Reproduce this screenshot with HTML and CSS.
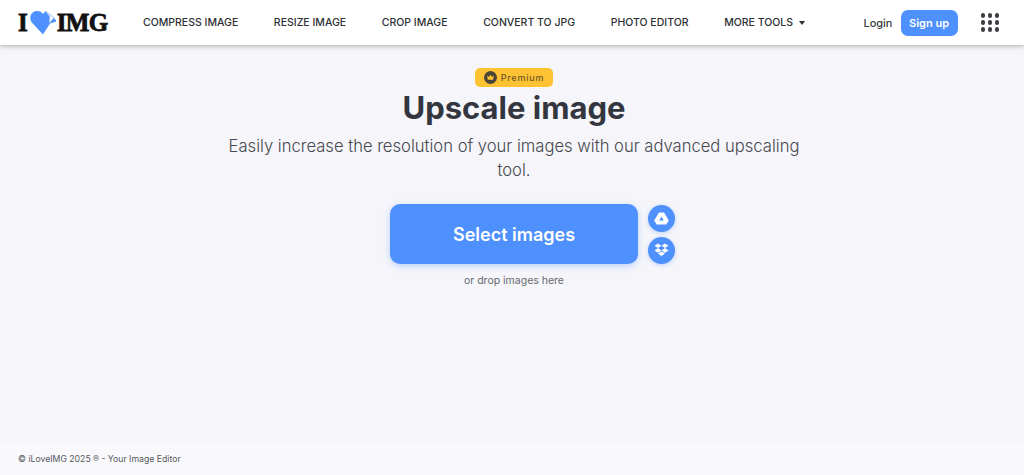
FILE: index.html
```html
<!DOCTYPE html>
<html lang="en">

<head>
    <meta charset="UTF-8">
    <meta name="viewport" content="width=device-width, initial-scale=1.0">
    <title>Upscale image</title>
    <link rel="stylesheet" href="styles.css">
</head>

<body>
    <header class="topbar">
        <a class="logo" href="#">
            <span>I</span>
            <svg class="logo-heart" width="27" height="25" viewBox="0 0 27 25">
                <path d="M13 24.5 L1.8 12.5 C-1.5 8 1 1.5 6.5 1 C9.5 0.7 11.5 2 13 4 L15.5 1 L24 7.5 L26.5 11.5 L20 13.5 Z" fill="#4d90fe"/>
                <path d="M15.5 1.2 L24 7.6 L19.5 13 L19.8 6.5 Z" fill="#fff" stroke="#a9c4f2" stroke-width="0.8"/>
            </svg>
            <span>IMG</span>
        </a>
        <nav class="main-nav">
            <a href="#">COMPRESS IMAGE</a>
            <a href="#">RESIZE IMAGE</a>
            <a href="#">CROP IMAGE</a>
            <a href="#">CONVERT TO JPG</a>
            <a href="#">PHOTO EDITOR</a>
            <a href="#">MORE TOOLS <span class="caret"></span></a>
        </nav>
        <div class="account">
            <a class="login" href="#">Login</a>
            <a class="signup" href="#">Sign up</a>
            <div class="apps-grid">
                <i></i><i></i><i></i><i></i><i></i><i></i><i></i><i></i><i></i>
            </div>
        </div>
    </header>

    <main class="tool">
        <div class="premium-badge">
            <svg width="13" height="13" viewBox="0 0 13 13">
                <circle cx="6.5" cy="6.5" r="6.5" fill="#4a4436"/>
                <path d="M3.2 4.5 L5 6 L6.5 3.8 L8 6 L9.8 4.5 L9.2 8.8 L3.8 8.8 Z" fill="#ffc233"/>
            </svg>
            Premium
        </div>
        <h1>Upscale image</h1>
        <p class="subtitle">Easily increase the resolution of your images with our advanced upscaling tool.</p>

        <div class="upload-row">
            <button class="select-btn">Select images</button>
            <div class="cloud-btns">
                <button class="cloud-btn" aria-label="Google Drive">
                    <svg width="15" height="13" viewBox="0 0 15 13">
                        <path d="M5 0.5 H10 L14.8 8.6 L12.3 12.6 H2.7 L0.2 8.6 Z M7.5 4.4 L5.2 8.4 H9.8 Z" fill="#fff" fill-rule="evenodd"/>
                    </svg>
                </button>
                <button class="cloud-btn" aria-label="Dropbox">
                    <svg width="15" height="14" viewBox="0 0 15 14">
                        <path d="M4 0.5 L7.5 2.8 L4 5.1 L0.5 2.8 Z M11 0.5 L14.5 2.8 L11 5.1 L7.5 2.8 Z M4 5.1 L7.5 7.4 L4 9.7 L0.5 7.4 Z M11 5.1 L14.5 7.4 L11 9.7 L7.5 7.4 Z M4 10.6 L7.5 8.4 L11 10.6 L7.5 13 Z" fill="#fff"/>
                    </svg>
                </button>
            </div>
        </div>
        <p class="drop-hint">or drop images here</p>
    </main>

    <footer class="page-footer">© iLoveIMG 2025 ® - Your Image Editor</footer>
</body>

</html>
```

FILE: styles.css
```css
* {
    box-sizing: border-box;
}

html,
body {
    height: 100%;
}

body {
    margin: 0;
    font-family: Inter, "Liberation Sans", sans-serif;
    background-color: #f5f5fa;
    color: #383e45;
    display: flex;
    flex-direction: column;
    overflow: hidden;
}

a {
    color: inherit;
    text-decoration: none;
}

button {
    border: none;
    font-family: inherit;
    cursor: pointer;
}

.topbar {
    height: 45px;
    flex-shrink: 0;
    background-color: #fff;
    box-shadow: 0 1px 5px rgba(0, 0, 0, 0.3);
    display: flex;
    align-items: center;
    padding: 0 25px 0 18px;
}

.logo {
    display: flex;
    align-items: center;
    width: 125px;
    font-family: "Liberation Serif", serif;
    font-weight: 700;
    font-size: 25px;
    letter-spacing: -0.6px;
    line-height: 1;
    color: #111;
    -webkit-text-stroke: 0.8px #111;
}

.logo-heart {
    margin: 0 0 0 2.5px;
}

.main-nav {
    display: flex;
    align-items: center;
    gap: 35.6px;
    font-size: 10.5px;
    font-weight: 500;
    color: #2c2f33;
}

.caret {
    display: inline-block;
    margin-left: 3px;
    vertical-align: 1px;
    border-left: 3.5px solid transparent;
    border-right: 3.5px solid transparent;
    border-top: 4px solid #2c2f33;
}

.account {
    margin-left: auto;
    display: flex;
    align-items: center;
    font-size: 11px;
}

.login {
    font-weight: 500;
    margin-right: 8px;
}

.signup {
    background-color: #4d90fe;
    color: #fff;
    font-weight: 600;
    width: 57px;
    height: 26px;
    border-radius: 7px;
    display: flex;
    align-items: center;
    justify-content: center;
    margin-right: 23px;
}

.apps-grid {
    display: grid;
    grid-template-columns: repeat(3, 4.5px);
    gap: 2.5px;
}

.apps-grid i {
    width: 4.5px;
    height: 4.5px;
    border-radius: 50%;
    background-color: #3c3f44;
}

.tool {
    flex: 1;
    display: flex;
    flex-direction: column;
    align-items: center;
    padding: 23px 0 0 4px;
}

.premium-badge {
    display: flex;
    align-items: center;
    gap: 4px;
    height: 19px;
    padding: 0 9px;
    border-radius: 5px;
    background-color: #ffc233;
    color: #6b5826;
    font-size: 9px;
    font-weight: 500;
    letter-spacing: 0.8px;
}

h1 {
    margin: 0;
    font-size: 31px;
    line-height: 42px;
    font-weight: 700;
    color: #33363f;
}

.subtitle {
    margin: 5px 0 0;
    width: 590px;
    text-align: center;
    font-size: 16.6px;
    font-weight: 300;
    line-height: 24px;
    color: #47494f;
}

.upload-row {
    display: flex;
    align-items: center;
    gap: 10px;
    margin: 22px -37px 0 0;
}

.select-btn {
    width: 248px;
    height: 60px;
    border-radius: 10px;
    background-color: #4d90fe;
    color: #fff;
    font-size: 18px;
    font-weight: 600;
    box-shadow: 0 2px 6px rgba(77, 144, 254, 0.35);
}

.cloud-btns {
    display: flex;
    flex-direction: column;
    gap: 5px;
}

.cloud-btn {
    width: 27px;
    height: 27px;
    padding: 0;
    border-radius: 50%;
    background-color: #4d90fe;
    display: flex;
    align-items: center;
    justify-content: center;
    box-shadow: 0 1px 4px rgba(77, 144, 254, 0.35);
}

.drop-hint {
    margin: 10px 0 0;
    font-size: 10.5px;
    color: #666a70;
}

.page-footer {
    height: 32px;
    flex-shrink: 0;
    background-color: #f9f9fb;
    padding: 0 18px;
    display: flex;
    align-items: center;
    font-size: 8.7px;
    color: #55585e;
}
```
